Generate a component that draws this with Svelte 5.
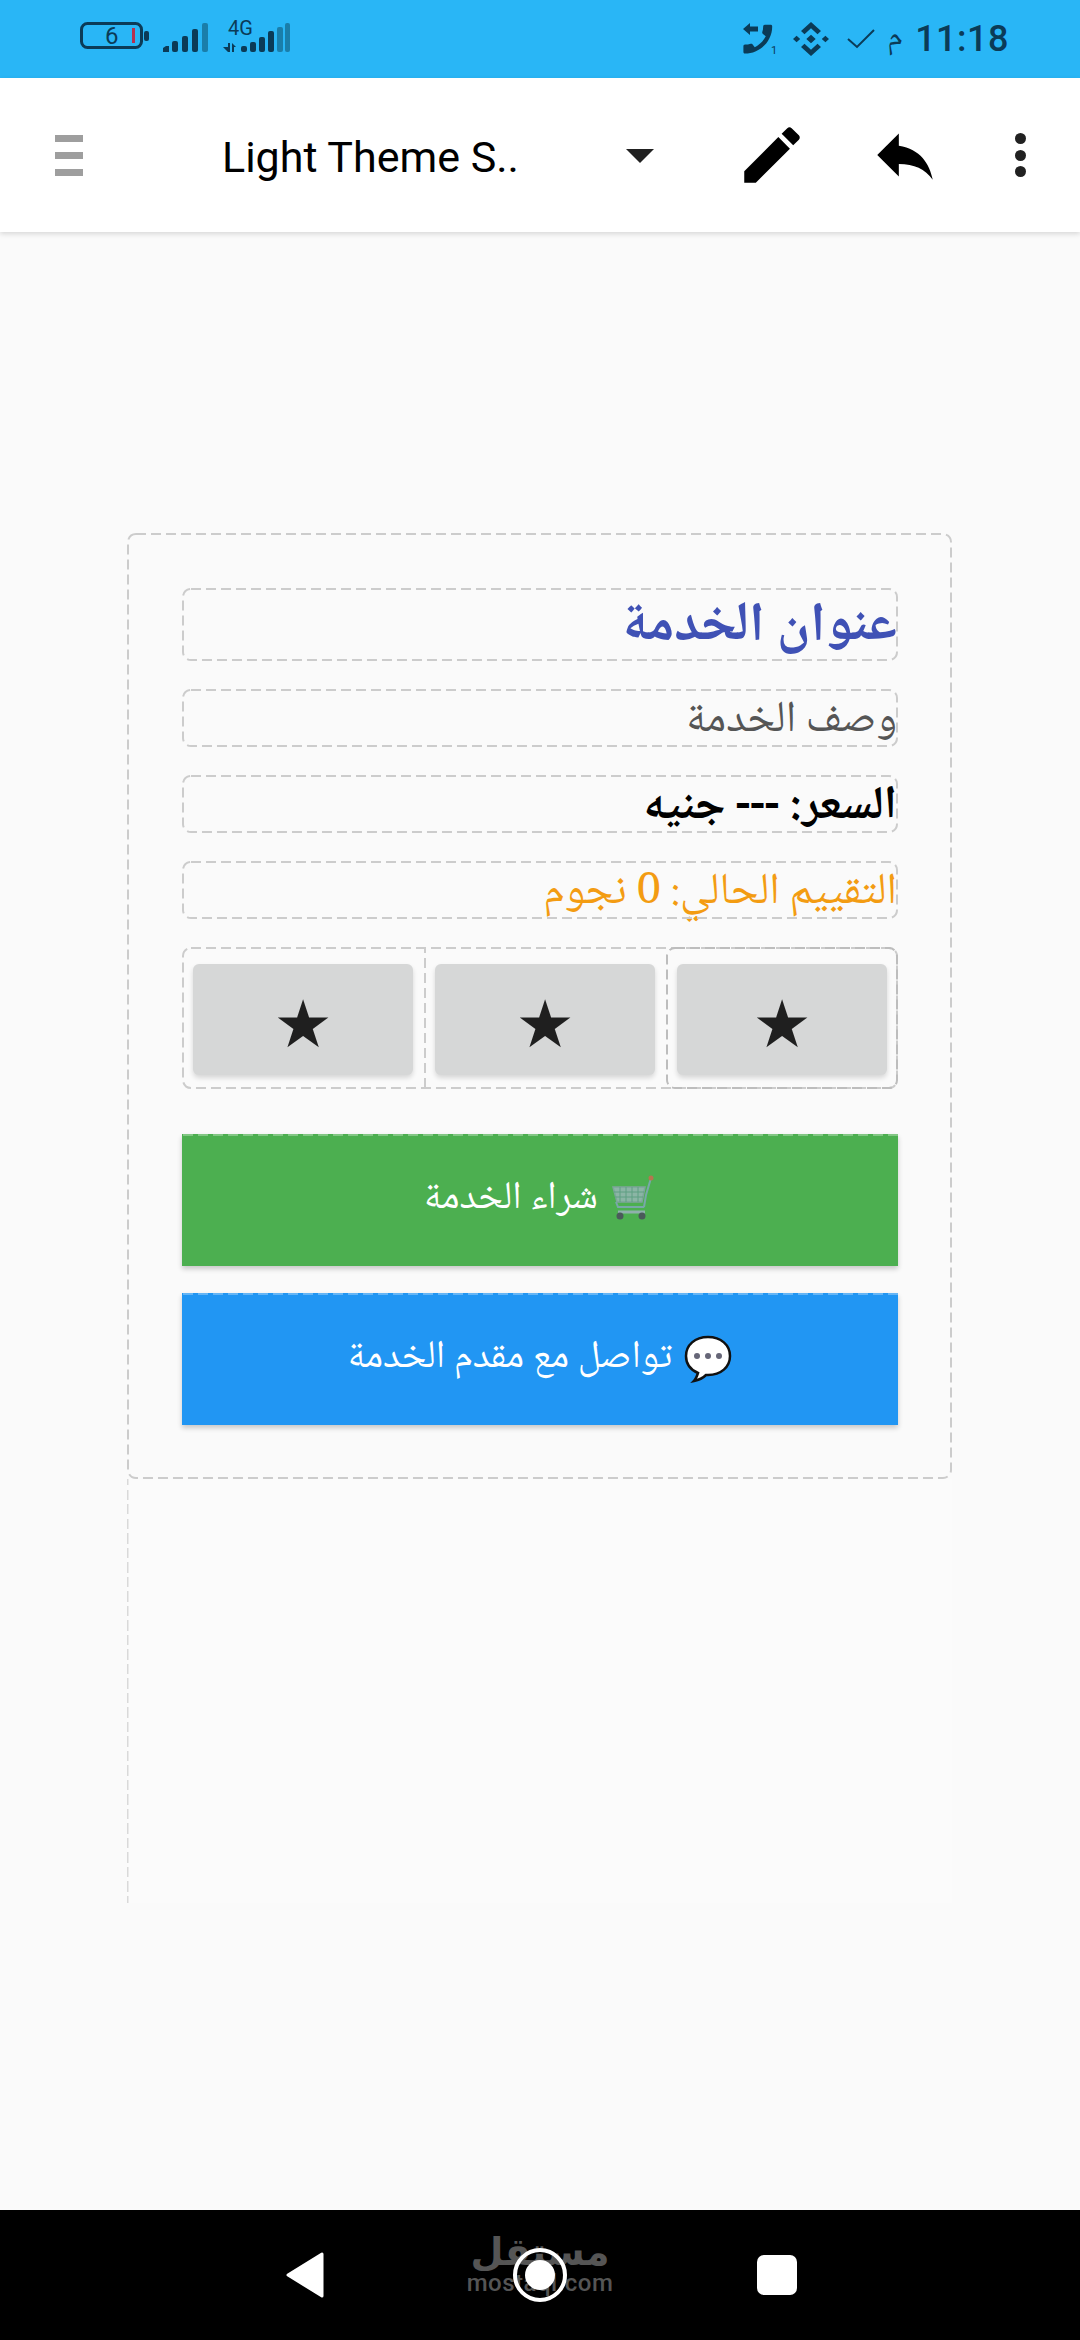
<script>
  const stars = [0, 1, 2];
  const cellDash = ['', 'line', 'darker'];
</script>

{#snippet dash(kind = '')}
  <svg class="dash {kind}" aria-hidden="true"><rect /></svg>
{/snippet}

<div class="screen">
  <header class="status">
    <svg class="left-icons" width="210" height="40" viewBox="0 0 210 40" aria-hidden="true">
      <rect x="1.5" y="1.5" width="60" height="24" rx="6" fill="none" stroke="#0b3b57" stroke-width="3"/>
      <text x="25" y="22" class="bat">6</text>
      <rect x="52" y="6" width="3" height="15" fill="#b5304f"/>
      <rect x="64" y="9" width="5" height="10" rx="2" fill="#0b3b57"/>
      <g fill="#0b3b57">
        <path d="M83 26l3-2h3v6h-6z"/>
        <rect x="92" y="19" width="6" height="11" rx="2"/>
        <rect x="102" y="14" width="6" height="16" rx="2"/>
        <rect x="112" y="7" width="6" height="23" rx="2"/>
      </g>
      <rect x="122" y="1" width="6" height="29" rx="2" fill="#1a7eaa"/>
      <text x="148" y="13" class="lte">4G</text>
      <path d="M148 21h2v9h-2zM143 25h5v5zM152 21l4 4h-2v5h-2z" fill="#0b3b57"/>
      <g fill="#0b3b57">
        <rect x="161" y="24" width="6" height="6" rx="2"/>
        <rect x="170" y="20" width="6" height="10" rx="2"/>
        <rect x="179" y="15" width="6" height="15" rx="2"/>
        <rect x="188" y="9" width="6" height="21" rx="2"/>
      </g>
      <rect x="197" y="5" width="6" height="25" rx="2" fill="#1a7eaa"/>
      <rect x="205" y="1" width="5" height="29" rx="2" fill="#1a7eaa"/>
    </svg>
    <div class="right-icons">
      <svg class="phone" width="34" height="32" viewBox="0 0 34 32" aria-hidden="true">
        <path transform="translate(34,-3) scale(-1.6,1.6)" d="M20.010 15.380c-1.230 0-2.420-.2-3.530-.56-.35-.12-.74-.03-1.010.24l-1.570 1.970c-2.830-1.350-5.480-3.900-6.890-6.830l1.950-1.660c.27-.28.35-.67.24-1.020-.37-1.110-.56-2.300-.56-3.530 0-.54-.45-.99-.99-.99H4.190C3.650 3 3 3.240 3 3.990 3 13.280 10.730 21 20.010 21c.71 0 .99-.63.99-1.180v-3.450c0-.54-.45-.99-.99-.99z" fill="#0b3b57"/>
        <path d="M0 6l7-6v3.500h8v5H7V12z" fill="#0b3b57"/>
        <text x="28" y="31" class="sim">1</text>
      </svg>
      <svg class="binance" width="36" height="34" viewBox="0 0 36 34" aria-hidden="true">
        <path d="M18 0l10 9-3.500 3.200L18 6.300l-6.500 5.900L8 9zM18 34L8 25l3.500-3.200 6.500 5.900 6.500-5.900L28 25zM0 17l3.600-3.300L7.200 17l-3.600 3.300zM28.800 17l3.600-3.300L36 17l-3.600 3.300zM18 12.700l4.700 4.300-4.700 4.300-4.700-4.300z" fill="#0b3b57"/>
      </svg>
      <svg class="check" width="28" height="20" viewBox="0 0 28 20" aria-hidden="true">
        <path d="M1 10l9 8L27 1" fill="none" stroke="#0b3b57" stroke-width="2"/>
      </svg>
      <span class="meridiem">م</span>
      <span class="time">11:18</span>
    </div>
  </header>

  <nav class="appbar">
    <div class="menu"><i></i><i></i><i></i></div>
    <span class="title">Light Theme S..</span>
    <span class="caret"></span>
    <svg class="act edit" width="74" height="74" viewBox="0 0 24 24" aria-hidden="true">
      <path d="M3 17.250V21h3.750L17.810 9.940l-3.750-3.750L3 17.250zM20.710 7.040c.39-.39.39-1.020 0-1.410l-2.340-2.340c-.39-.39-1.020-.39-1.410 0l-1.830 1.830 3.750 3.750 1.830-1.830z"/>
    </svg>
    <svg class="act reply" width="74" height="74" viewBox="0 0 24 24" aria-hidden="true">
      <path d="M10 9V5l-7 7 7 7v-4.100c5 0 8.500 1.600 11 5.100-1-5-4-10-11-11z"/>
    </svg>
    <div class="dots"><i></i><i></i><i></i></div>
  </nav>

  <main class="canvas">
    <div class="frame">
      <section class="card" dir="rtl">
        {@render dash()}
        <h1 class="box heading">{@render dash()}عنوان الخدمة</h1>
        <p class="box desc">{@render dash()}وصف الخدمة</p>
        <p class="box price">{@render dash()}السعر: --- جنيه</p>
        <p class="box rating">{@render dash()}التقييم الحالي: 0 نجوم</p>
        <div class="stars" dir="ltr">
          {@render dash()}
          {#each stars as s}
            <div class="cell">
              {#if cellDash[s]}{@render dash(cellDash[s])}{/if}
              <button class="star">★</button>
            </div>
          {/each}
        </div>
        <button class="cta buy">
          {@render dash('faint')}
          <svg class="emoji" width="46" height="46" viewBox="0 0 46 46" aria-hidden="true">
            <path d="M3 12h32l-3 15H7z" fill="#8bb5a5" stroke="#7da59b" stroke-width="1.500"/>
            <path d="M10 12v15M16 12v15M22 12v15M28 12v15M4 17h30M5 22h28" stroke="#5f9f82" stroke-width="1"/>
            <path d="M6 27l2 5h26M34 32l2-12 5-17" fill="none" stroke="#78a8a8" stroke-width="2"/>
            <path d="M8 37h27" stroke="#8fb0ac" stroke-width="3"/>
            <circle cx="41" cy="3" r="2.500" fill="#b5764f"/>
            <circle cx="10" cy="41" r="3.500" fill="#4a5a5a"/>
            <circle cx="32" cy="41" r="3.500" fill="#4a5a5a"/>
          </svg>
          <span>شراء الخدمة</span>
        </button>
        <button class="cta talk">
          {@render dash('faint')}
          <svg width="48" height="48" viewBox="0 0 48 48" aria-hidden="true">
            <path d="M24 2C11 2 2 10 2 21c0 8 5 14 12 17-1 3-2 6-4 8 5-1 9-3 12-6h2c13 0 22-8 22-19S37 2 24 2z" fill="#fff" stroke="#111" stroke-width="2.500"/>
            <circle cx="13" cy="21" r="3" fill="#667"/>
            <circle cx="24" cy="21" r="3" fill="#667"/>
            <circle cx="35" cy="21" r="3" fill="#667"/>
          </svg>
          <span>تواصل مع مقدم الخدمة</span>
        </button>
      </section>
    </div>
  </main>

  <footer class="navbar">
    <svg class="back" width="38" height="46" viewBox="0 0 38 46" aria-hidden="true">
      <path d="M36 2v42L2 23z" fill="#fff" stroke="#fff" stroke-width="3" stroke-linejoin="round"/>
    </svg>
    <div class="home">
      <div class="mark"><b>مستقل</b><small>mostaql.com</small></div>
      <span class="ring"><i></i></span>
    </div>
    <span class="square"></span>
  </footer>
</div>

<style>
  :global(body) { margin: 0; background: #fafafa; }
  .screen {
    width: 1080px; height: 2340px; display: flex; flex-direction: column; overflow: hidden;
    font-family: "Noto Naskh Arabic", "Noto Sans Arabic", "Noto Sans", "DejaVu Sans", sans-serif;
  }
  .status {
    height: 78px; flex: none; background: #29b6f6; display: flex; align-items: center;
    justify-content: space-between; padding: 0 71px 0 80px; box-sizing: border-box;
  }
  .left-icons { margin-top: 5px; overflow: visible; }
  .left-icons text { font-family: Roboto, sans-serif; fill: #0b3b57; }
  .bat { font-size: 24px; }
  .lte { font-size: 20px; }
  .phone { overflow: visible; }
  .sim { font-family: Roboto, sans-serif; font-size: 11px; fill: #0b3b57; }
  .right-icons { display: flex; align-items: center; color: #0b3b57; }
  .binance { margin-left: 16px; }
  .check { margin-left: 18px; }
  .meridiem { margin-left: 12px; font-size: 32px; line-height: 40px; width: 17px; }
  .time { margin-left: 11px; font: 500 36px/40px Roboto, sans-serif; letter-spacing: 0.5px; }

  .appbar {
    height: 154px; flex: none; background: #fff; display: flex; align-items: center; position: relative;
    box-shadow: 0 2px 5px rgba(0,0,0,.14); box-sizing: border-box; padding-left: 55px; z-index: 1;
  }
  .menu { width: 28px; display: flex; flex-direction: column; gap: 10px; }
  .menu i { height: 7px; background: #9e9e9e; display: block; }
  .title { margin: 4px 0 0 139px; width: 300px; font: 400 43px/50px Roboto, sans-serif; color: #000; white-space: nowrap; }
  .caret {
    margin-left: 104px; width: 0; height: 0; border-left: 14px solid transparent; border-right: 14px solid transparent;
    border-top: 14px solid #212121; margin-top: 2px;
  }
  .act { fill: #000; flex: none; }
  .edit { margin-left: 81px; }
  .reply { margin-left: 59px; }
  .dots { margin-left: 73px; display: flex; flex-direction: column; gap: 5.500px; }
  .dots i { width: 11px; height: 11px; border-radius: 50%; background: #212121; display: block; }

  .canvas { flex: 1; padding: 301px 0 0 127px; box-sizing: border-box; }
  .frame {
    width: 825px; height: 1370px; box-sizing: border-box; background-color: #fbfbfb;
    background-image: repeating-linear-gradient(to bottom, #d9d9d9 0 10px, transparent 10px 14.500px);
    background-size: 1.500px 100%; background-repeat: no-repeat;
  }
  .card {
    position: relative; height: 946px; box-sizing: border-box; border: 2px solid transparent;
    padding: 53px 52px 0 53px; display: flex; flex-direction: column; background: #fafafa;
  }
  .dash { position: absolute; inset: 0; width: 100%; height: 100%; pointer-events: none; overflow: visible; }
  .card > .dash { inset: -2px; width: calc(100% + 4px); height: calc(100% + 4px); }
  .dash rect {
    x: 1px; y: 1px; width: calc(100% - 2px); height: calc(100% - 2px); rx: 8px; ry: 8px; fill: none;
    stroke: #ccc; stroke-width: 2; stroke-dasharray: 10 5;
  }
  .dash.darker rect { stroke: #bdbdbd; }
  .dash.line { width: 2px; overflow: hidden; }
  .dash.line rect { width: 20px; rx: 0; ry: 0; }
  .dash.faint { height: 2px; overflow: hidden; }
  .dash.faint rect { height: 20px; rx: 0; ry: 0; stroke: rgba(255,255,255,.3); }
  .box {
    position: relative; margin: 0 0 28px; box-sizing: border-box; height: 58px; padding: 4px 1px 0 0;
    line-height: 58px; white-space: nowrap; text-align: right;
  }
  .heading { height: 73px; line-height: 73px; font-size: 55px; font-weight: 700; color: #3f51b5; }
  .desc { font-size: 44px; color: #555; }
  .price { font-size: 46.500px; font-weight: 700; color: #000; }
  .rating { font-size: 44px; color: #f39c12; }
  .stars { position: relative; display: flex; height: 142px; box-sizing: border-box; margin-bottom: 45px; }
  .cell { position: relative; width: 242px; flex: none; box-sizing: border-box; padding: 17px 11px 0; }
  .cell:last-child { flex: 1; width: auto; }
  .star {
    display: block; width: 100%; height: 111px; border: 0; padding: 10px 0 0; background: #d6d7d7; border-radius: 6px;
    font: 400 66px/101px "DejaVu Sans", sans-serif; color: #1f1f1f; box-shadow: 0 3px 5px rgba(0,0,0,.14);
  }
  .cta {
    position: relative; flex: none; height: 132px; border: 0; padding: 0; margin: 0 0 27px; display: flex; align-items: center; justify-content: center;
    gap: 12px; color: #fff; font: 400 39px/44px "Noto Naskh Arabic", "Noto Sans Arabic", "Noto Sans", "DejaVu Sans", sans-serif;
    box-shadow: 0 3px 5px rgba(0,0,0,.2);
  }
  .emoji { margin-bottom: 4px; }
  .buy { background: #4caf50; }
  .talk { background: #2196f3; }

  .navbar {
    height: 130px; flex: none; background: #000; display: flex; align-items: flex-start; box-sizing: border-box; padding-left: 286px;
  }
  .back { margin-top: 42px; flex: none; }
  .home { margin-left: 150px; width: 132px; position: relative; height: 100px; margin-top: 21px; flex: none; }
  .mark { display: flex; flex-direction: column; align-items: center; color: #555; }
  .mark b { font: 700 38px/42px "DejaVu Sans", sans-serif; white-space: nowrap; }
  .mark small { font: 500 24px/20px Roboto, sans-serif; letter-spacing: .5px; white-space: nowrap; }
  .ring {
    position: absolute; left: 39px; top: 17px; width: 54px; height: 54px; border-radius: 50%; border: 4.500px solid #fff; box-sizing: border-box;
    display: flex; align-items: center; justify-content: center;
  }
  .ring i { width: 30px; height: 30px; border-radius: 50%; background: #fff; display: block; }
  .square { margin: 45px 0 0 151px; width: 40px; height: 40px; background: #fff; border-radius: 7px; flex: none; }
</style>
